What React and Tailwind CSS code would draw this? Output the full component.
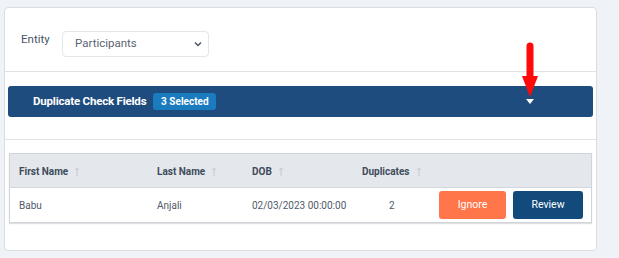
import React from 'react';

const SortArrow = () => (
  <svg width="6" height="10" viewBox="0 0 6 10" className="ml-[6px] inline-block">
    <path d="M3 1 V9 M1 3 L3 1 L5 3" stroke="#c4cad2" strokeWidth="1" fill="none" />
  </svg>
);

export default function App() {
  const columns = [
    { label: 'First Name', w: 'w-[138px]' },
    { label: 'Last Name', w: 'w-[95px]' },
    { label: 'DOB', w: 'w-[110px]' },
    { label: 'Duplicates', w: 'w-[77px]' },
  ];

  return (
    <div className="w-[619px] h-[258px] bg-[#eff2f6] pt-[7px] pl-[4px] font-['Roboto',sans-serif] relative">
      <div className="w-[593px] h-[244px] bg-white border border-[#d9dde2] rounded-[4px] flex flex-col">
        {/* Entity */}
        <div className="h-[64px] border-b border-[#dfe2e6] flex items-start pt-[23px] pl-[16px]">
          <span className="w-[41px] text-[11.5px] text-[#4a5566]">Entity</span>
          <div className="w-[147px] h-[26px] border border-[#e3e6ea] rounded-[4px] flex items-center justify-between pl-[12px] pr-[6px]">
            <span className="text-[11.5px] text-[#5b6573]">Participants</span>
            <svg width="8" height="6" viewBox="0 0 8 6">
              <path d="M1 1.5 L4 4.5 L7 1.5" stroke="#4a5566" strokeWidth="1.5" fill="none" />
            </svg>
          </div>
        </div>

        {/* Duplicate check bar */}
        <div className="h-[68px] border-b border-[#dfe2e6] pt-[14px] px-[3px]">
          <div className="h-[31px] bg-[#1e4c7f] rounded-[3px] flex items-center pl-[25px] relative">
            <span className="text-[11.5px] font-bold text-white tracking-[-0.2px]">Duplicate Check Fields</span>
            <span className="ml-[7px] h-[17px] w-[63px] justify-center bg-[#1a7bbf] rounded-[3px] text-[10px] font-bold text-white flex items-center">3 Selected</span>
            <svg width="8" height="5" viewBox="0 0 8 5" className="absolute left-[518px] top-[13px]">
              <path d="M0 0 H8 L4 5 Z" fill="#ffffff" />
            </svg>
          </div>
        </div>

        {/* Table */}
        <div className="pt-[13px] px-[4px]">
          <div className="border border-[#cfd4da] shadow-[0_1px_1px_rgba(0,0,0,0.12)]">
            <div className="h-[34px] bg-[#e4e7eb] border-b border-[#d3d7dc] flex items-center pl-[9px] pt-[2px]">
              {columns.map((c) => (
                <div key={c.label} className={`${c.w} flex items-center text-[10px] font-bold text-[#3f4b5c]`}>
                  {c.label}
                  <SortArrow />
                </div>
              ))}
            </div>
            <div className="h-[34px] flex items-center pl-[9px] text-[10px] text-[#4f5a69]">
              <div className="w-[138px]">Babu</div>
              <div className="w-[95px]">Anjali</div>
              <div className="w-[110px]">02/03/2023 00:00:00</div>
              <div className="w-[77px] pl-[27px]">2</div>
              <button className="w-[67px] h-[28px] bg-[#ff764a] rounded-[3px] text-white text-[10.5px]">Ignore</button>
              <button className="ml-[7px] w-[70px] h-[28px] bg-[#134a7c] rounded-[3px] text-white text-[10.5px]">Review</button>
            </div>
          </div>
        </div>
      </div>

      {/* Red annotation arrow */}
      <svg width="20" height="56" viewBox="0 0 20 56" className="absolute left-[520px] top-[42px]">
        <path d="M10 4 V36" stroke="#ff0a0a" strokeWidth="7" strokeLinecap="round" />
        <path d="M2 34 H18 L10 55 Z" fill="#ff0a0a" />
      </svg>
    </div>
  );
}
